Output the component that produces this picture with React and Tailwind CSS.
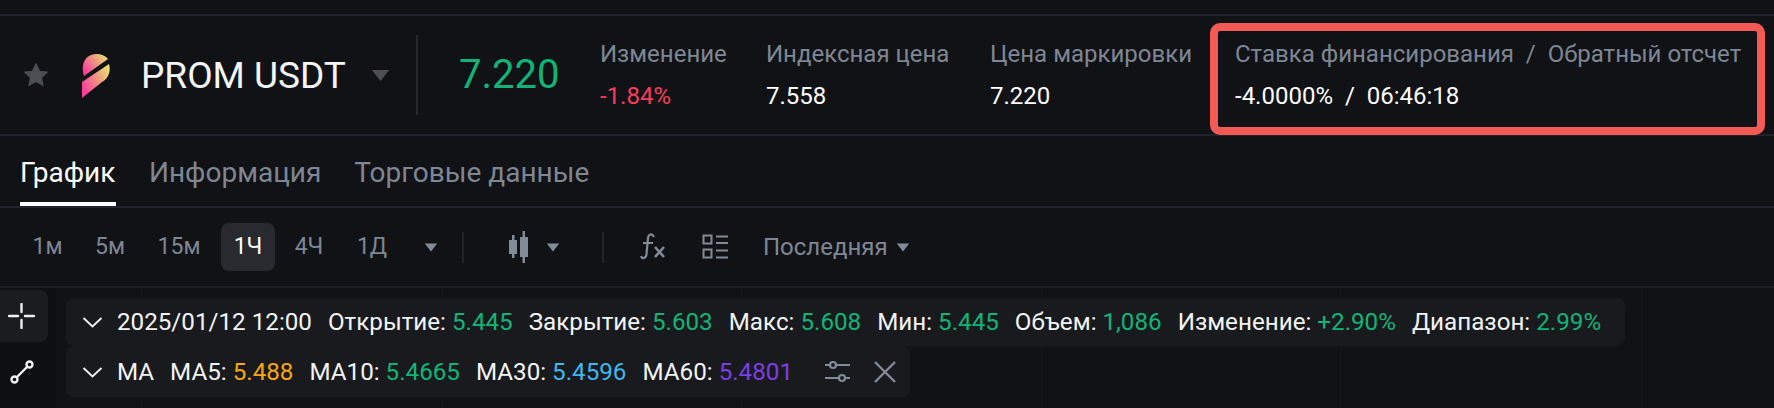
const F = { fontFamily: 'Roboto, "Noto Sans", sans-serif' };
const G = "text-[#0fb578]";
function Caret({ className = "", w = 12, h = 8, color = "#838b98" }) {
  return (
    <svg width={w} height={h} viewBox="0 0 12 8" className={`shrink-0 ${className}`}>
      <path d="M0.5 0.5H11.5L6 7.5Z" fill={color} />
    </svg>
  );
}
function Chev() {
  return (
    <svg width="21" height="12" viewBox="0 0 21 12" className="shrink-0">
      <path d="M1.5 2L10.500 10.500L19.500 2" fill="none" stroke="#eef0f3" strokeWidth="1.900" />
    </svg>
  );
}
function Stat({ label, value, cls = "text-white", w }) {
  return (
    <div className={`flex flex-col gap-[14px] ${w}`}>
      <div className="text-[24px] leading-[28px] text-[#7f8694] whitespace-pre">{label}</div>
      <div className={`text-[24px] leading-[28px] whitespace-pre ${cls}`}>{value}</div>
    </div>
  );
}
function KV({ k, v, c = G }) {
  return (
    <span className="whitespace-nowrap text-[#f2f3f5]">
      {k} <span className={c}>{v}</span>
    </span>
  );
}
const Grid = () => (
  <div className="absolute inset-0 pointer-events-none">
    {[141, 442, 741, 1041, 1340, 1641].map((x) => (
      <div key={x} className="absolute top-0 bottom-0 w-px bg-[#17181b]" style={{ left: x }} />
    ))}
  </div>
);
export default function App() {
  return (
    <div style={F} className="w-[1774px] h-[408px] overflow-hidden bg-[#111215] flex flex-col">
      <div className="h-[14px] shrink-0" />
      <div className="h-[2px] shrink-0 bg-[#23242b]" />
      <div className="h-[118px] shrink-0 flex items-center relative">
        <svg width="26" height="26" viewBox="0 0 24 24" className="ml-[23px] shrink-0">
          <path d="M12 1.5l3.2 7 7.300.8-5.400 5 1.500 7.500L12 18l-6.600 3.800 1.500-7.500-5.400-5 7.300-.8z" fill="#4c4f54" stroke="#4c4f54" strokeLinejoin="round" />
        </svg>
        <svg width="28" height="45" viewBox="0 0 28 45" className="ml-[33px] shrink-0">
          <defs>
            <linearGradient id="pg" x1="0" y1="0.85" x2="1" y2="0.2">
              <stop offset="0.1" stopColor="#f8409a" />
              <stop offset="1" stopColor="#e8e06c" />
            </linearGradient>
          </defs>
          <path d="M2 23C-1 15 1 5 9 2C15 0 22 1 26 6Z" fill="url(#pg)" />
          <path d="M0 45V29L27 11C29 17 27 25 20 29Z" fill="url(#pg)" />
        </svg>
        <div className="ml-[31px] text-[37px] leading-none text-[#f4f5f7] w-[203px] whitespace-nowrap">PROM USDT</div>
        <Caret className="ml-[27px]" w={19} h={13} color="#4c4f54" />
        <div className="ml-[26px] w-[2px] h-[80px] bg-[#25272c]" />
        <div className="ml-[41px] text-[40px] leading-none text-[#0fb578] w-[141px]">7.220</div>
        <div className="flex">
          <Stat label="Изменение" value="-1.84%" cls="text-[#f63e5b]" w="w-[166px]" />
          <Stat label="Индексная цена" value="7.558" w="w-[224px]" />
          <Stat label="Цена маркировки" value="7.220" w="w-[245px]" />
          <Stat label="Ставка финансирования  /  Обратный отсчет" value="-4.0000%  /  06:46:18" w="" />
        </div>
        <div className="absolute left-[1210px] top-[7px] w-[555px] h-[112px] rounded-[10px] border-[8px] border-[#f35a56]" />
      </div>
      <div className="h-[2px] shrink-0 bg-[#23242b]" />
      <div className="h-[70px] shrink-0 flex items-end pl-[20px] gap-[33px] text-[28px]">
        <div className="h-full w-[96px] pt-[3px] flex items-center relative text-white">
          График
          <div className="absolute left-0 right-0 bottom-0 h-[4px] bg-white" />
        </div>
        <div className="h-full pt-[3px] flex items-center text-[#7f8694]">Информация</div>
        <div className="h-full pt-[3px] flex items-center text-[#7f8694]">Торговые данные</div>
      </div>
      <div className="h-[2px] shrink-0 bg-[#23242b]" />
      <div className="h-[78px] shrink-0 flex items-center text-[23px] text-[#7f8694] pl-[22px]">
        <span className="w-[51px] h-[48px] flex items-center justify-center">1м</span>
        <span className="w-[74px] h-[48px] flex items-center justify-center">5м</span>
        <span className="w-[64px] h-[48px] flex items-center justify-center">15м</span>
        <span className="ml-[10px] w-[54px] h-[48px] flex items-center justify-center rounded-[8px] bg-[#282a2f] text-white">1Ч</span>
        <span className="w-[68px] h-[48px] flex items-center justify-center">4Ч</span>
        <span className="w-[58px] h-[48px] flex items-center justify-center">1Д</span>
        <Caret className="ml-[23px]" w={14} h={9} />
        <div className="ml-[24px] w-[2px] h-[31px] bg-[#22242a]" />
        <svg width="24" height="32" viewBox="0 0 24 32" className="ml-[43px] shrink-0">
          <path d="M5 4h2.500v5H10v14H7.500v4H5v-4H2V9h3z" fill="#838b98" />
          <path d="M15.500 0H18v6h3v20h-3v6h-2.500v-6H13V6h2.500z" fill="#838b98" />
        </svg>
        <Caret className="ml-[15px]" w={14} h={9} />
        <div className="ml-[42px] w-[2px] h-[31px] bg-[#22242a]" />
        <svg width="26" height="28" viewBox="0 0 26 28" className="ml-[36px] shrink-0">
          <path d="M14 4C12 0 8.500 1 8 5L6.500 21C6 26 2 26 1 23M3 10H13" fill="none" stroke="#838b98" strokeWidth="2.200" />
          <path d="M15 14L24 24M24 14L15 24" fill="none" stroke="#838b98" strokeWidth="2.600" />
        </svg>
        <svg width="26" height="26" viewBox="0 0 26 26" className="ml-[36px] shrink-0">
          <path d="M1.500 1.500H9.500V9.500H1.500ZM1.500 15.500H9.500V23.500H1.500Z" fill="none" stroke="#838b98" strokeWidth="2" />
          <path d="M14 2.500H26M14 9H26M14 16.500H26M14 23.500H26" stroke="#838b98" strokeWidth="2.200" />
        </svg>
        <span className="ml-[35px] w-[124px] text-[24px] whitespace-nowrap">Последняя</span>
        <Caret className="ml-[9px]" w={14} h={9} />
      </div>
      <div className="h-[2px] shrink-0 bg-[#1f2026]" />
      <div className="flex-1 flex relative">
        <Grid />
        <div className="relative w-[56px] shrink-0 bg-[#0e0f12] flex flex-col">
          <div className="w-[48px] h-[52px] mt-[2px] pl-[8px] rounded-r-[8px] bg-[#1b1c20] flex items-center">
            <svg width="27" height="26" viewBox="0 0 27 26">
              <path d="M1 13H10M17 13H26M13.500 1V9M13.500 17V25" stroke="#eef0f3" strokeWidth="2.400" strokeLinecap="round" />
            </svg>
          </div>
          <div className="h-[60px] flex items-center pl-[10px]">
            <svg width="24" height="24" viewBox="0 0 24 24">
              <circle cx="4.500" cy="19.500" r="3" fill="none" stroke="#eef0f3" strokeWidth="2.400" />
              <circle cx="19.500" cy="4.500" r="3" fill="none" stroke="#eef0f3" strokeWidth="2.400" />
              <path d="M6.500 17.500L17.500 6.500" stroke="#eef0f3" strokeWidth="2.400" />
            </svg>
          </div>
        </div>
        <div className="relative flex-1 flex flex-col items-start pl-[10px] pt-[10px] text-[24.2px] leading-[26px]">
          <div className="w-[1559px] h-[48px] rounded-[8px] bg-[#191a1d] flex items-center pl-[16px] gap-[16px]">
            <Chev />
            <span className="text-[#f2f3f5] -ml-[2px]">2025/01/12 12:00</span>
            <KV k="Открытие:" v="5.445" />
            <KV k="Закрытие:" v="5.603" />
            <KV k="Макс:" v="5.608" />
            <KV k="Мин:" v="5.445" />
            <KV k="Объем:" v="1,086" />
            <KV k="Изменение:" v="+2.90%" />
            <KV k="Диапазон:" v="2.99%" />
          </div>
          <div className="w-[844px] h-[51px] rounded-[8px] bg-[#191a1d] flex items-center pl-[16px] gap-[16px]">
            <Chev />
            <span className="text-[#f2f3f5] -ml-[2px]">MA</span>
            <KV k="MA5:" v="5.488" c="text-[#f7a80f]" />
            <KV k="MA10:" v="5.4665" />
            <KV k="MA30:" v="5.4596" c="text-[#3fb8ee]" />
            <KV k="MA60:" v="5.4801" c="text-[#7c3fe4]" />
            <svg width="25" height="22" viewBox="0 0 25 22" className="ml-[16px] shrink-0">
              <circle cx="8" cy="4" r="3" fill="none" stroke="#838b98" strokeWidth="2.200" />
              <circle cx="17" cy="17" r="3" fill="none" stroke="#838b98" strokeWidth="2.200" />
              <path d="M0 4H5M11 4H25M0 17H14M20 17H25" stroke="#838b98" strokeWidth="2.200" />
            </svg>
            <svg width="22" height="22" viewBox="0 0 22 22" className="ml-[8px] shrink-0">
              <path d="M1 1L21 21M21 1L1 21" stroke="#838b98" strokeWidth="2.400" />
            </svg>
          </div>
        </div>
      </div>
    </div>
  );
}
